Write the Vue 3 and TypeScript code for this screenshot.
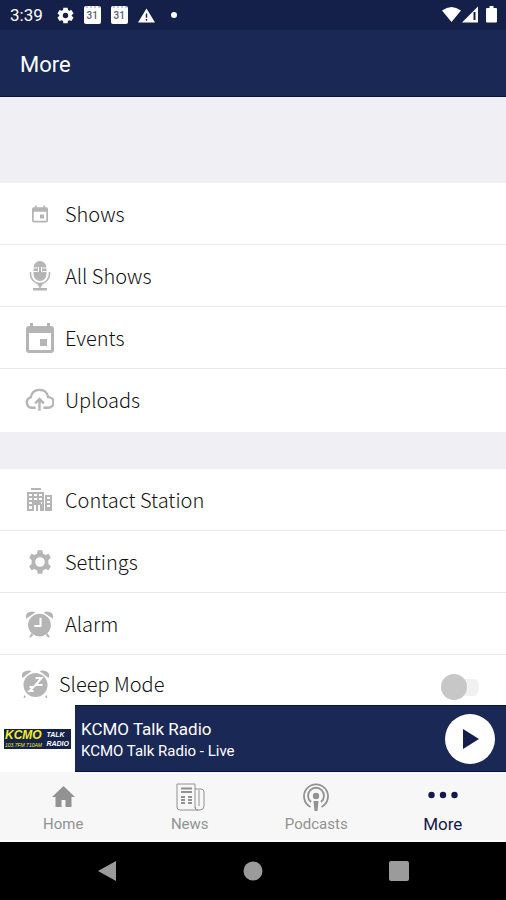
<script setup lang="ts">
import { ref } from 'vue'

interface MenuItem {
  label: string
  icon: string
}

const programming: MenuItem[] = [
  { label: 'Shows', icon: 'calendar-small' },
  { label: 'All Shows', icon: 'mic' },
  { label: 'Events', icon: 'calendar' },
  { label: 'Uploads', icon: 'upload' },
]

const station: MenuItem[] = [
  { label: 'Contact Station', icon: 'building' },
  { label: 'Settings', icon: 'gear' },
  { label: 'Alarm', icon: 'alarm' },
]

const groups = [programming, station]
const tabs = ['Home', 'News', 'Podcasts', 'More']
const activeTab = ref('More')
const sleepMode = ref(false)
</script>

<template>
  <div class="screen">
    <div class="status">
      <span class="clock">3:39</span>
      <svg class="s-icon" viewBox="0 0 24 24"><path fill-rule="evenodd" d="M9 1h6l.5 3.300 1.900 1.100 3-1.100 3 5-2.600 2v1.400l2.600 2-3 5-3-1.100-1.900 1.100L15 23H9l-.5-3.300-1.900-1.100-3 1.100-3-5 2.600-2v-1.400l-2.600-2 3-5 3 1.100 1.900-1.100zM12 8.200a3.800 3.800 0 1 0 0 7.600 3.800 3.800 0 0 0 0-7.600z" /></svg>
      <span v-for="n in 2" :key="n" class="date">31</span>
      <svg class="s-icon" viewBox="0 0 24 24"><path fill-rule="evenodd" d="M12 2l12 20H0zM11 9v6h2V9zm0 8v2.500h2V17z" /></svg>
      <span class="more-dot"></span>
      <span class="spacer"></span>
      <svg class="signals" viewBox="0 0 56 20">
        <path d="M0 5.500Q9.500-1.500 19 5.500L9.500 17z" />
        <path d="M20 17.500L36 1.500v16z" />
        <path class="signal-gap" d="M31.500 7h2v8h-2z" />
        <path d="M45 3h2.500V1h4v2H54q1 0 1 1v12.500q0 1-1 1h-9q-1 0-1-1V4q0-1 1-1z" />
      </svg>
    </div>

    <header class="header"><h1>More</h1></header>

    <main class="content">
      <ul v-for="(group, g) in groups" :key="g" class="group">
        <li v-for="item in group" :key="item.label">
          <a class="row" href="#">
            <span class="icon">
              <svg v-if="item.icon === 'calendar-small'" class="small" viewBox="0 0 28 30"><path fill-rule="evenodd" d="M5 0h3v3h12V0h3v3h2q3 0 3 3v21q0 3-3 3H3q-3 0-3-3V6q0-3 3-3h2zM3 11v16h22V11zM14 16h7v7h-7z" /></svg>
              <svg v-else-if="item.icon === 'calendar'" class="large" viewBox="0 0 28 30"><path fill-rule="evenodd" d="M4 0h3v3h14V0h3v3h1q3 0 3 3v21q0 3-3 3H3q-3 0-3-3V6q0-3 3-3h1zM3 10v17h22V10zM14 16h7v7h-7z" /></svg>
              <svg v-else-if="item.icon === 'mic'" class="mic" viewBox="0 0 22 30">
                <rect x="4.500" y="0" width="13" height="20" rx="6.500" />
                <path class="cut" d="M4 7h4.500M13.500 7H18M4 10.500h4.500M13.500 10.500H18M9.500 6v5M12.500 6v5" />
                <path class="line" d="M1.500 11v2a9.500 9.500 0 0 0 19 0v-2M11 22v6" />
                <path d="M8 23h6l-3 4zM4 27h14v2.500H4z" />
              </svg>
              <svg v-else-if="item.icon === 'upload'" class="wide" viewBox="0 0 30 24">
                <path class="cloud" d="M11 20H7A5.500 5.500 0 0 1 6 9.200C7 4 10.500 1.500 15 1.500S23 4 24 9a5.500 5.500 0 0 1 0 11h-5M15 23V11M10.500 15.500L15 11l4.500 4.500" />
              </svg>
              <svg v-else-if="item.icon === 'building'" class="building" viewBox="0 0 25 24">
                <path fill-rule="evenodd" d="M4 0h10v2H4zM0 4h17v19h-4v-6h-2v6H9v-6H7v6H0zM2 6v2h3V6zm5 0v2h3V6zm5 0v2h3V6zM2 10v2h3v-2zm5 0v2h3v-2zm5 0v2h3v-2zM2 14v2h3v-2zM14 14v2h1v-2zM2 18v3h3v-3zM18 7h7v16h-7zM20 9v2h3V9zm0 4v2h3v-2zm0 4v2h3v-2z" />
              </svg>
              <svg v-else-if="item.icon === 'gear'" class="large" viewBox="0 0 24 24"><path fill-rule="evenodd" d="M10 2h4l.5 2.700 2.200 1.200 2.600-1 2 3.500-2.100 1.800v3.600l2.100 1.800-2 3.500-2.600-1-2.200 1.200L14 22h-4l-.5-2.700-2.200-1.200-2.600 1-2-3.500 2.100-1.800v-3.600L2.700 8.400l2-3.500 2.600 1 2.200-1.200zM12 7.900a4.100 4.100 0 1 0 0 8.200 4.100 4.100 0 0 0 0-8.200z" /></svg>
              <svg v-else class="wide" viewBox="0 0 28 26">
                <circle cx="14" cy="14" r="11" />
                <path d="M1 8Q0 3 4 1.500T10 2zM27 8Q28 3 24 1.500T18 2zM6 22l2 1.500L5.500 26H4zM22 22l-2 1.500 2.500 2.500H24z" />
                <path class="hands" d="M15 7v8H9" />
              </svg>
            </span>
            <span>{{ item.label }}</span>
          </a>
        </li>
        <li v-if="g === 1">
          <label class="row sleep">
            <span class="icon">
              <svg class="wide" viewBox="0 0 28 28">
                <circle cx="14" cy="15" r="12" />
                <path d="M1 8Q-1 3 3 1.500T10 1zM27 8Q29 3 25 1.500T18 1zM3 25l1.500 1.500L3 28H2zM25 25l-1.500 1.500L25 28h1z" />
                <path class="hands" d="M14 8h6l-6 7h7M8 17h4l-4 4h4" />
              </svg>
            </span>
            <span>Sleep Mode</span>
            <input v-model="sleepMode" class="switch" type="checkbox" role="switch" />
          </label>
        </li>
      </ul>
    </main>

    <section class="player">
      <div class="art">
        <div class="logo">
          <span class="call"><b>KCMO</b><small>103.7FM 710AM</small></span>
          <span class="talk"><b>TALK</b><b>RADIO</b></span>
        </div>
      </div>
      <div class="now">
        <div class="track">
          <strong>KCMO Talk Radio</strong>
          <span>KCMO Talk Radio - Live</span>
        </div>
        <button class="play" type="button" aria-label="Play">
          <svg viewBox="0 0 50 50"><path d="M18 15v20l16-10z" /></svg>
        </button>
      </div>
    </section>

    <nav class="tabs">
      <button
        v-for="tab in tabs"
        :key="tab"
        type="button"
        class="tab"
        :class="{ active: tab === activeTab }"
        @click="activeTab = tab"
      >
        <svg v-if="tab === 'Home'" viewBox="0 0 30 30"><path d="M15.500 4L27 15h-3.500v10h-6v-7h-4v7h-6V15H4z" /></svg>
        <svg v-else-if="tab === 'News'" viewBox="0 0 30 30">
          <path class="outline" d="M2 2h18v23q0 3 3 3H5q-3 0-3-3zM20 7h6q3 0 3 3v14q0 4-4 4h-2q-3 0-3-3M24 8v16" />
          <path class="outline thick" d="M6 6.500h11M6 10h11M6 15h4M6 18h4M6 21h4M13 15h4M13 18h4M13 21h4" />
        </svg>
        <svg v-else-if="tab === 'Podcasts'" viewBox="0 0 30 30">
          <path class="rings" d="M9.500 25a12 12 0 1 1 11 0M10 20a8 8 0 1 1 10 0" />
          <circle cx="15" cy="14" r="3.200" />
          <path d="M12.500 19h5l-1 10h-3z" />
        </svg>
        <svg v-else viewBox="0 0 30 30"><circle cx="3.500" cy="13" r="3.200" /><circle cx="15" cy="13" r="3.200" /><circle cx="26.500" cy="13" r="3.200" /></svg>
        <span>{{ tab }}</span>
      </button>
    </nav>

    <div class="system">
      <button type="button" aria-label="Back"><svg viewBox="0 0 20 22"><path d="M19 1v20L1 11z" /></svg></button>
      <button type="button" aria-label="Home screen"><svg viewBox="0 0 20 22"><circle cx="10" cy="11" r="9.500" /></svg></button>
      <button type="button" aria-label="Recent apps"><svg viewBox="0 0 20 22"><rect y="1" width="20" height="20" rx="2" /></svg></button>
    </div>
  </div>
</template>

<style>
body {
  margin: 0;
}
</style>

<style scoped>
.screen {
  display: flex;
  flex-direction: column;
  height: 100vh;
  overflow: hidden;
  background: #fff;
  color: #1c1c1c;
  font-family: Roboto, "Liberation Sans", sans-serif;
}

svg {
  display: block;
  fill: currentColor;
}

button {
  border: 0;
  padding: 0;
  background: none;
  color: inherit;
  font: inherit;
}

.status {
  flex: none;
  display: flex;
  align-items: center;
  gap: 10px;
  height: 30px;
  padding: 0 8px 0 10px;
  background: #14204a;
  color: #fff;
}

.clock {
  margin-right: 4px;
  font-size: 17px;
}

.s-icon {
  width: 17px;
  height: 17px;
}

.date {
  box-sizing: border-box;
  width: 17px;
  height: 18px;
  border-top: 2px dotted #c5c9d6;
  border-radius: 2px;
  background: #fff;
  color: #596078;
  font-size: 10px;
  font-weight: 500;
  line-height: 15px;
  text-align: center;
}

.more-dot {
  width: 6px;
  height: 6px;
  margin-left: 6px;
  border-radius: 50%;
  background: #fff;
}

.spacer {
  flex: 1;
}

.signals {
  width: 56px;
  height: 20px;
}

.signal-gap {
  fill: #14204a;
}

.header {
  flex: none;
  display: flex;
  align-items: center;
  box-sizing: border-box;
  height: 67px;
  padding: 2px 20px 0;
  border-bottom: 1px solid #0a1040;
  background: #1a2855;
  color: #fff;
}

h1 {
  margin: 0;
  font-size: 22px;
  font-weight: 400;
}

.content {
  flex: 1;
  min-height: 0;
  padding-top: 86px;
  overflow-y: auto;
  scrollbar-width: none;
  background: #efeff4;
}

.group {
  margin: 0 0 37px;
  padding: 0 0 2px;
  list-style: none;
  background: #fff;
}

.group li + li {
  border-top: 1px solid #e9e9ec;
}

.row {
  display: flex;
  align-items: center;
  gap: 10px;
  height: 61px;
  padding: 0 24px;
  color: #111;
  font-family: "Noto Sans CJK SC", "Noto Sans", sans-serif;
  font-size: 20px;
  font-weight: 300;
  line-height: 28px;
  text-decoration: none;
}

.icon {
  display: flex;
  justify-content: center;
  width: 31px;
  color: #b5b5b5;
}

.small {
  width: 16px;
  height: 18px;
}

.large {
  width: 28px;
  height: 30px;
}

.mic {
  width: 22px;
  height: 30px;
}

.building {
  width: 25px;
  height: 24px;
}

.wide {
  width: 29px;
  height: 28px;
}

.cut,
.line,
.cloud,
.hands,
.outline,
.rings {
  fill: none;
  stroke: currentColor;
}

.cut,
.hands {
  stroke: #fff;
}

.hands {
  stroke-width: 2;
}

.line {
  stroke-width: 1.5;
}

.cloud {
  stroke-width: 2.5;
}

.thick {
  stroke-width: 2;
}

.sleep {
  gap: 8px;
  height: 58px;
  padding: 0 27px 0 20px;
}

.switch {
  display: flex;
  align-items: center;
  width: 38px;
  height: 26px;
  margin: 6px 0 0 auto;
  border-radius: 13px;
  background: linear-gradient(90deg, #f1f1f1, #f1f1f1) center / 100% 17px no-repeat;
  appearance: none;
}

.switch::before {
  width: 26px;
  height: 26px;
  border-radius: 50%;
  background: #c7c7c7;
  content: "";
}

.switch:checked {
  justify-content: flex-end;
}

.player {
  flex: none;
  display: flex;
  height: 67px;
}

.art {
  display: flex;
  align-items: center;
  justify-content: center;
  width: 75px;
  background: #fff;
}

.logo {
  display: flex;
  align-items: center;
  justify-content: space-between;
  box-sizing: border-box;
  width: 67px;
  height: 20px;
  padding: 0 2px 0 1px;
  background: #17224a;
  font-family: "Liberation Sans", sans-serif;
  font-style: italic;
}

.call,
.talk {
  display: flex;
  flex-direction: column;
}

.call {
  color: #f5ee21;
}

.call b {
  font-size: 12px;
  line-height: 13px;
}

.call small {
  font-size: 5px;
  line-height: 6px;
  white-space: nowrap;
}

.talk {
  color: #fff;
  font-size: 7px;
  line-height: 9px;
}

.now {
  flex: 1;
  display: flex;
  align-items: center;
  justify-content: space-between;
  box-sizing: border-box;
  padding: 0 11px 0 6px;
  border: solid #0a1040;
  border-width: 1px 0;
  background: #1a2855;
  color: #fff;
}

.track {
  display: flex;
  flex-direction: column;
}

.track strong {
  font-size: 17px;
  font-weight: 400;
  line-height: 24px;
}

.track span {
  font-size: 15px;
  line-height: 20px;
}

.play {
  width: 50px;
  height: 50px;
  border-radius: 50%;
  background: #fff;
  color: #14204a;
}

.tabs {
  flex: none;
  display: grid;
  grid-template-columns: repeat(4, 1fr);
  box-sizing: border-box;
  height: 70px;
  border-bottom: 2px solid #fff;
  background: #f7f7f7;
}

.tab {
  display: flex;
  flex-direction: column;
  align-items: center;
  padding-top: 10px;
  color: #929292;
  font-size: 15px;
  line-height: 24px;
}

.tab svg {
  width: 30px;
  height: 30px;
}

.active {
  color: #14194b;
  font-size: 17px;
}

.rings {
  stroke-width: 1.8;
}

.system {
  flex: none;
  display: flex;
  align-items: center;
  justify-content: space-around;
  height: 58px;
  padding: 0 34px;
  background: #000;
  color: #9b9b9b;
}

.system svg {
  width: 20px;
  height: 22px;
}
</style>
